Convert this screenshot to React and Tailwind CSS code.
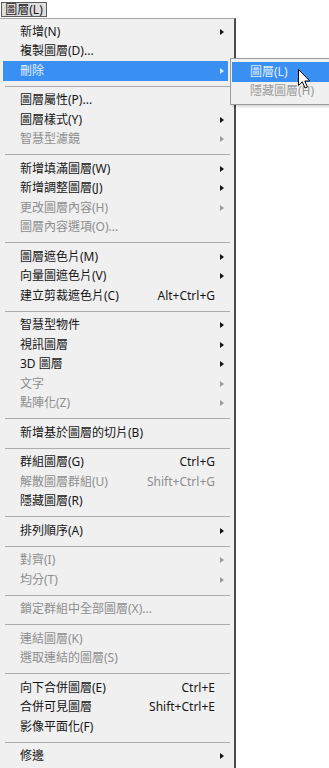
import React from "react";

const items = [
  { l: "新增(N)", a: true },
  { l: "複製圖層(D)..." },
  { l: "刪除", a: true, hi: true },
  "sep",
  { l: "圖層屬性(P)..." },
  { l: "圖層樣式(Y)", a: true },
  { l: "智慧型濾鏡", a: true, d: true },
  "sep",
  { l: "新增填滿圖層(W)", a: true },
  { l: "新增調整圖層(J)", a: true },
  { l: "更改圖層內容(H)", a: true, d: true },
  { l: "圖層內容選項(O)...", d: true },
  "sep",
  { l: "圖層遮色片(M)", a: true },
  { l: "向量圖遮色片(V)", a: true },
  { l: "建立剪裁遮色片(C)", s: "Alt+Ctrl+G" },
  "sep",
  { l: "智慧型物件", a: true },
  { l: "視訊圖層", a: true },
  { l: "3D 圖層", a: true },
  { l: "文字", a: true, d: true },
  { l: "點陣化(Z)", a: true, d: true },
  "sep",
  { l: "新增基於圖層的切片(B)" },
  "sep",
  { l: "群組圖層(G)", s: "Ctrl+G" },
  { l: "解散圖層群組(U)", s: "Shift+Ctrl+G", d: true },
  { l: "隱藏圖層(R)" },
  "sep",
  { l: "排列順序(A)", a: true },
  "sep",
  { l: "對齊(I)", a: true, d: true },
  { l: "均分(T)", a: true, d: true },
  "sep",
  { l: "鎖定群組中全部圖層(X)...", d: true },
  "sep",
  { l: "連結圖層(K)", d: true },
  { l: "選取連結的圖層(S)", d: true },
  "sep",
  { l: "向下合併圖層(E)", s: "Ctrl+E" },
  { l: "合併可見圖層", s: "Shift+Ctrl+E" },
  { l: "影像平面化(F)" },
  "sep",
  { l: "修邊", a: true },
];

function Arrow({ color }) {
  return (
    <span
      className="block w-0 h-0 border-y-[3.5px] border-y-transparent border-l-[4px]"
      style={{ borderLeftColor: color }}
    />
  );
}

function Row({ it }) {
  const color = it.hi ? "#e4efff" : it.d ? "#8e8e8e" : "#161616";
  return (
    <div
      className={`ml-[3px] mr-[6px] h-[19.5px] flex items-center pl-[17px] ${it.hi ? "bg-[#3a8ff2]" : ""}`}
      style={{ color }}
    >
      <span className="flex-1 whitespace-nowrap leading-none">{it.l}</span>
      {it.s && <span className="whitespace-nowrap leading-none">{it.s}</span>}
      <div className="w-[13px] h-full flex items-center">
        {it.a && (
          <span className="ml-[5px]">
            <Arrow color={it.hi ? "#dbe9ff" : it.d ? "#9a9a9a" : "#111111"} />
          </span>
        )}
      </div>
    </div>
  );
}

export default function App() {
  return (
    <div
      className="relative w-[329px] h-[768px] overflow-hidden bg-white text-[12px]"
      style={{ fontFamily: '"Noto Sans", "Noto Sans CJK TC", sans-serif' }}
    >
      <div className="h-[18px] pt-[2px] pl-[1px]">
        <div className="w-[46px] h-[15px] border border-[#5c5c5c] bg-[#dedede] flex items-center justify-center text-[#1a1a1a] leading-none">
          圖層(L)
        </div>
      </div>
      <div className="w-[236px] border-t border-[#a8a8a8] border-r-2 border-r-[#4a4a4a] bg-[#f0f0f0] pt-[3px] pb-[10px]">
        {items.map((it, i) =>
          it === "sep" ? (
            <div key={i} className="h-[10px] pt-[5px] pl-[5px] pr-[4px]">
              <div className="h-px bg-[#acacac]" />
            </div>
          ) : (
            <Row key={i} it={it} />
          )
        )}
      </div>

      <div className="absolute left-[230px] top-[58px] w-[102px] border border-[#9a9a9a] bg-[#f0f0f0] pt-[3px] pb-[3px] shadow-[2px_2px_2px_rgba(0,0,0,0.15)]">
        <div className="mx-[1px] h-[19.5px] flex items-center pl-[18px] bg-[#3a8ff2] text-[#e4efff] leading-none">
          圖層(L)
        </div>
        <div className="mx-[1px] h-[19.5px] flex items-center pl-[18px] text-[#9a9a9a] leading-none">
          隱藏圖層(H)
        </div>
      </div>

      <svg
        className="absolute left-[298px] top-[69px]"
        width="13"
        height="21"
        viewBox="0 0 13 21"
      >
        <path
          d="M0.5 0.5 L0.5 16.5 L4.3 12.8 L7 19 L9.4 18 L6.8 12 L11.8 12 Z"
          fill="#ffffff"
          stroke="#000000"
          strokeWidth="1"
          strokeLinejoin="miter"
        />
      </svg>
    </div>
  );
}
